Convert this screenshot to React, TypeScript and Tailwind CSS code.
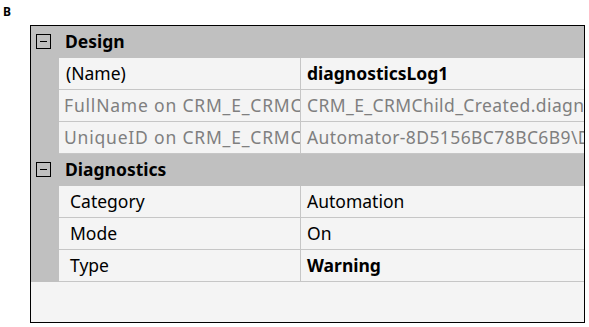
import React from "react";

type Row = { label: string; value: string; muted?: boolean; bold?: boolean; indent?: boolean };

const sections: { title: string; rows: Row[] }[] = [
  {
    title: "Design",
    rows: [
      { label: "(Name)", value: "diagnosticsLog1", bold: true },
      { label: "FullName on CRM_E_CRMChild_Created", value: "CRM_E_CRMChild_Created.diagnosticsLog1", muted: true },
      { label: "UniqueID on CRM_E_CRMChild_Created", value: "Automator-8D5156BC78BC6B9\\Diagnostics", muted: true },
    ],
  },
  {
    title: "Diagnostics",
    rows: [
      { label: "Category", value: "Automation", indent: true },
      { label: "Mode", value: "On", indent: true },
      { label: "Type", value: "Warning", bold: true, indent: true },
    ],
  },
];

const MinusBox = () => (
  <div className="w-[15px] h-[15px] border border-black flex items-center justify-center shrink-0">
    <div className="w-[7px] h-px bg-black" />
  </div>
);

const App = () => {
  return (
    <div className="w-[589px] h-[327px] bg-white font-['Noto_Sans',sans-serif] text-[17.5px] text-black overflow-hidden">
      <div className="pl-[3px] pt-[5px] h-[25px] text-[12px] font-bold leading-[14px]">B</div>
      <div className="ml-[30px] w-[555px] h-[298px] border-[1.5px] border-black bg-[#f4f4f4] overflow-hidden">
        {sections.map((s) => (
          <div key={s.title}>
            <div className="h-[32px] bg-[#c0c0c0] flex items-center pl-[5px] pb-[2px] gap-[14px]">
              <MinusBox />
              <span className="font-bold">{s.title}</span>
            </div>
            {s.rows.map((r) => (
              <div key={r.label} className="h-[32px] flex">
                <div className="w-[28px] bg-[#c0c0c0] shrink-0" />
                <div
                  className={`w-[242px] shrink-0 border-b border-r border-[#c6c6c6] flex items-center overflow-hidden whitespace-nowrap ${
                    r.indent ? "pl-[11px]" : r.muted ? "pl-[5px] tracking-[0.8px]" : "pl-[7px]"
                  } ${r.muted ? "text-[#7f7f7f]" : ""}`}
                >
                  {r.label}
                </div>
                <div
                  className={`flex-1 border-b border-[#c6c6c6] flex items-center overflow-hidden whitespace-nowrap pl-[6px] ${
                    r.bold ? "font-bold" : ""
                  } ${r.muted ? "text-[#7f7f7f] tracking-[0.4px]" : ""}`}
                >
                  {r.value}
                </div>
              </div>
            ))}
          </div>
        ))}
      </div>
    </div>
  );
};

export default App;
